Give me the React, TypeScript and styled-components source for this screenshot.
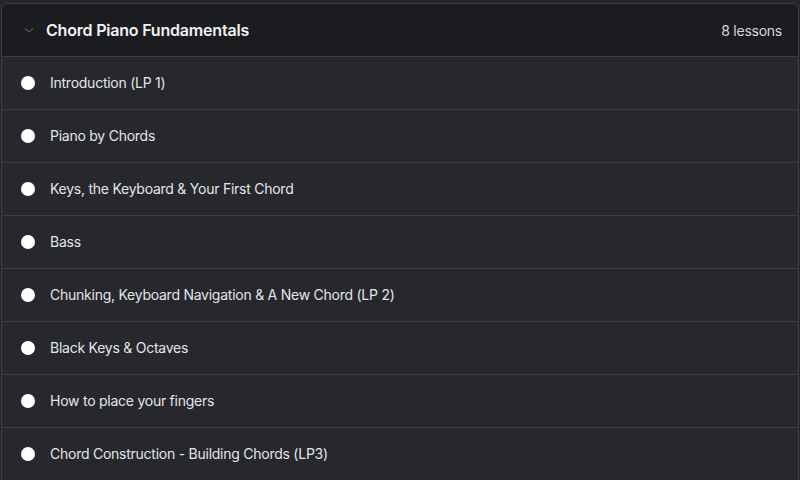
import React from "react";
import styled, { createGlobalStyle } from "styled-components";

const GlobalStyle = createGlobalStyle`
  html, body {
    margin: 0;
    padding: 0;
    background: #24262a;
    font-family: Inter, "Noto Sans", sans-serif;
  }
`;

const Page = styled.div`
  padding: 3px 1px 0 1px;
  height: 480px;
  box-sizing: border-box;
  overflow: hidden;
`;

const Section = styled.section`
  border: 1px solid #3a3c41;
  border-bottom: none;
  border-radius: 6px 6px 0 0;
  overflow: hidden;
  background: #26282d;
`;

const Header = styled.header`
  display: flex;
  align-items: center;
  justify-content: space-between;
  height: 52px;
  padding: 0 16px 0 21px;
  background: #1b1c1f;
  border-bottom: 1px solid #3a3c41;
`;

const TitleGroup = styled.div`
  display: flex;
  align-items: center;
  gap: 11px;
`;

const Chevron = styled.svg`
  width: 12px;
  height: 12px;
  color: #4f5258;
`;

const Title = styled.h2`
  margin: 0;
  font-size: 16px;
  font-weight: 600;
  letter-spacing: -0.2px;
  color: #f2f2f3;
`;

const Count = styled.span`
  font-size: 14px;
  letter-spacing: -0.25px;
  color: #d6d7d9;
`;

const List = styled.ul`
  list-style: none;
  margin: 0;
  padding: 0;
`;

const Row = styled.li`
  display: flex;
  align-items: center;
  gap: 15px;
  height: 52px;
  padding: 0 19px;
  border-bottom: 1px solid #3a3c41;
`;

const Dot = styled.span`
  width: 14px;
  height: 14px;
  border-radius: 50%;
  background: #ffffff;
  flex-shrink: 0;
`;

const Label = styled.span`
  font-size: 14px;
  line-height: 16px;
  letter-spacing: -0.25px;
  margin-top: -1px;
  color: #e4e5e7;
`;

const lessons = [
  "Introduction (LP 1)",
  "Piano by Chords",
  "Keys, the Keyboard & Your First Chord",
  "Bass",
  "Chunking, Keyboard Navigation & A New Chord (LP 2)",
  "Black Keys & Octaves",
  "How to place your fingers",
  "Chord Construction - Building Chords (LP3)",
];

export default function App() {
  return (
    <>
      <GlobalStyle />
      <Page>
        <Section>
          <Header>
            <TitleGroup>
              <Chevron viewBox="0 0 12 12" fill="none">
                <path d="M2 4.5l4 3.5 4-3.5" stroke="currentColor" strokeWidth="1.1" strokeLinecap="round" strokeLinejoin="round" />
              </Chevron>
              <Title>Chord Piano Fundamentals</Title>
            </TitleGroup>
            <Count>{lessons.length} lessons</Count>
          </Header>
          <List>
            {lessons.map((l) => (
              <Row key={l}>
                <Dot />
                <Label>{l}</Label>
              </Row>
            ))}
          </List>
        </Section>
      </Page>
    </>
  );
}
